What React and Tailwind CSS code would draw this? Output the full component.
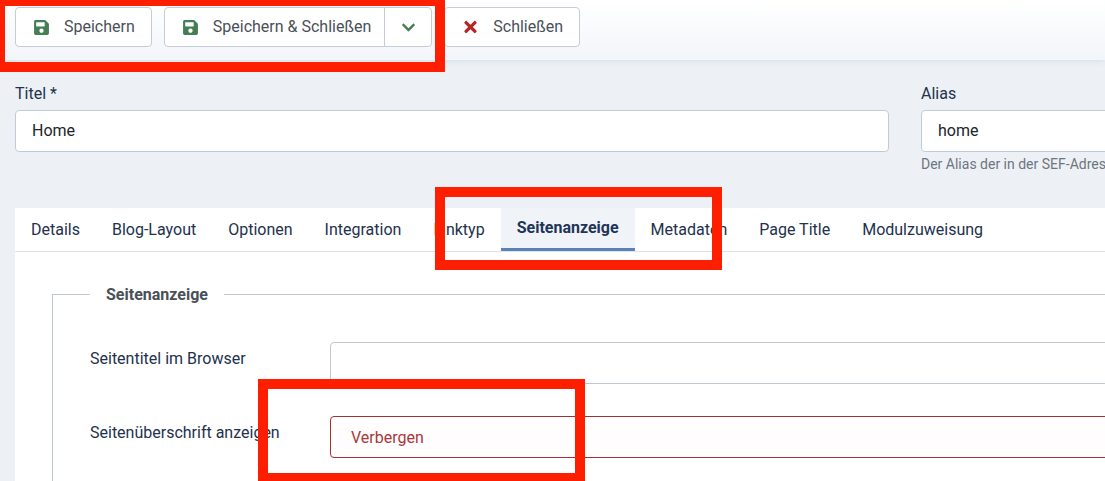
import React from 'react';
import { FaSave, FaTimes, FaChevronDown } from 'react-icons/fa';

const tabs = ['Details', 'Blog-Layout', 'Optionen', 'Integration', 'Linktyp', 'Seitenanzeige', 'Metadaten', 'Page Title', 'Modulzuweisung'];

function ToolbarButton({ icon, label, iconClass }) {
    return (
        <button className="h-[40px] bg-white border border-[#c5ccd6] rounded-[4px] pl-[18px] pr-[16px] flex items-center text-[#495057]">
            <span className={`w-[15px] mr-[15px] flex justify-center ${iconClass}`}>{icon}</span>
            {label}
        </button>
    );
}

export default function App() {
    return (
        <div className="relative w-[1105px] h-[481px] overflow-hidden bg-[#edf1f6] text-[16px] leading-[20px] text-[#22314d]" style={{ fontFamily: 'Roboto, sans-serif' }}>
            {/* toolbar */}
            <div className="h-[60px] pt-[7px] pl-[15px] flex gap-[12px] bg-gradient-to-b from-white to-[#f2f5fa] shadow-[0_1px_6px_rgba(60,80,120,0.12)]">
                <ToolbarButton icon={<FaSave />} label="Speichern" iconClass="text-[17px] text-[#457d54]" />
                <div className="h-[40px] bg-white border border-[#c5ccd6] rounded-[4px] flex items-center text-[#495057]">
                    <div className="pl-[18px] pr-[13px] flex items-center">
                        <span className="w-[15px] mr-[15px] flex justify-center text-[17px] text-[#457d54]"><FaSave /></span>
                        Speichern &amp; Schließen
                    </div>
                    <div className="w-[47px] h-full border-l border-[#c5ccd6] flex items-center justify-center text-[#457d54] text-[15px]">
                        <FaChevronDown />
                    </div>
                </div>
                <ToolbarButton icon={<FaTimes />} label="Schließen" iconClass="text-[18px] text-[#b52727]" />
            </div>

            {/* title + alias */}
            <div className="pt-[23px] pl-[15px] flex gap-[32px]">
                <div className="w-[874px] shrink-0">
                    <label className="block h-[27px] pt-[1px]">Titel *</label>
                    <div className="h-[42px] bg-white border border-[#c0cbd8] rounded-[4px] pl-[16px] flex items-center text-[#212529]">Home</div>
                </div>
                <div className="w-[400px] shrink-0">
                    <label className="block h-[27px] pt-[1px]">Alias</label>
                    <div className="h-[42px] bg-white border border-[#c0cbd8] rounded-[4px] pl-[16px] flex items-center text-[#212529]">home</div>
                    <div className="mt-[4px] text-[14px] leading-[16px] text-[#6d757e] whitespace-nowrap">Der Alias der in der SEF-Adresse verwendet wird</div>
                </div>
            </div>

            {/* tab panel */}
            <div className="mt-[36px] ml-[15px] h-[300px] bg-white overflow-hidden">
                <div className="h-[44px] border-b border-[#dfe3e7] flex">
                    {tabs.map((t) => (
                        <div
                            key={t}
                            className={t === 'Seitenanzeige'
                                ? 'h-[43px] px-[16px] flex items-center font-bold bg-[#f0f4f9] border-b-[3px] border-[#5a82b8] text-[#1f3557]'
                                : 'h-[43px] px-[16px] flex items-center'}
                        >
                            {t}
                        </div>
                    ))}
                </div>
                <fieldset className="mt-[32px] ml-[37px] w-[1200px] h-[300px] border border-[#c0c9cf] pl-[37px]">
                    <legend className="px-[16px] pt-[2px] font-bold text-[#495057] leading-[18px]">Seitenanzeige</legend>
                    <div className="pt-[38px] flex items-center">
                        <label className="w-[240px] -mt-[8px]">Seitentitel im Browser</label>
                        <div className="w-[900px] h-[42px] bg-white border border-[#c0c9cf] rounded-[4px]" />
                    </div>
                    <div className="mt-[32px] flex items-center">
                        <label className="w-[240px] -mt-[8px]">Seitenüberschrift anzeigen</label>
                        <div className="w-[900px] h-[42px] bg-[#fffdfd] border border-[#a5302f] rounded-[4px] pl-[20px] pt-[2px] flex items-center text-[#a9383a]">Verbergen</div>
                    </div>
                </fieldset>
            </div>

            {/* red annotation frames */}
            <div className="absolute left-0 top-[-10px] w-[445px] h-[82px] border-[10px] border-l-[5px] border-t-[16px] border-[#fe1f00]" />
            <div className="absolute left-[435px] top-[187px] w-[287px] h-[83px] border-[10px] border-[#fe1f00]" />
            <div className="absolute left-[258px] top-[379px] w-[327px] h-[102px] border-[10px] border-b-[8px] border-[#fe1f00]" />
        </div>
    );
}
